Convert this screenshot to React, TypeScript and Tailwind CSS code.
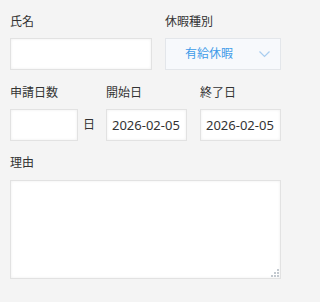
import React from "react";

const font = { fontFamily: '"Noto Sans", "Noto Sans CJK JP", sans-serif' };

export default function App() {
  const inputCls =
    "h-[32px] border border-[#e2e2e2] bg-white shadow-[inset_0_0_3px_rgba(0,0,0,0.07)] outline-none text-[13px] text-[#333] px-[5px]";
  const labelCls = "text-[12px] leading-[18px] text-[#333] mb-[7px]";
  return (
    <div className="w-[320px] h-[302px] bg-[#f4f4f4] px-[10px] pt-[13px]" style={font}>
      <div className="flex gap-[13px]">
        <div className="flex flex-col w-[142px]">
          <div className={labelCls}>氏名</div>
          <input className={inputCls + " w-[142px]"} readOnly />
        </div>
        <div className="flex flex-col w-[116px]">
          <div className={labelCls}>休暇種別</div>
          <div className="h-[32px] w-[116px] border border-[#e3e6ea] bg-[#f7f9fc] flex items-center pl-[19px] pr-[10px] justify-between">
            <span className="text-[12px] text-[#3d9be9]">有給休暇</span>
            <svg width="11" height="7" viewBox="0 0 11 7" className="mt-[1px]">
              <polyline points="0.5,0.5 5.5,5.5 10.5,0.5" fill="none" stroke="#a8cdef" strokeWidth="1.2" />
            </svg>
          </div>
        </div>
      </div>

      <div className="flex mt-[14px]">
        <div className="flex flex-col w-[96px]">
          <div className={labelCls}>申請日数</div>
          <div className="flex items-center gap-[5px]">
            <input className={inputCls + " w-[68px]"} readOnly />
            <span className="text-[12px] text-[#333]">日</span>
          </div>
        </div>
        <div className="flex flex-col w-[81px] mr-[13px]">
          <div className={labelCls}>開始日</div>
          <input className={inputCls + " w-[81px]"} value="2026-02-05" readOnly />
        </div>
        <div className="flex flex-col w-[81px]">
          <div className={labelCls}>終了日</div>
          <input className={inputCls + " w-[81px]"} value="2026-02-05" readOnly />
        </div>
      </div>

      <div className="flex flex-col mt-[13px]">
        <div className="text-[12px] leading-[18px] text-[#333] mb-[8px]">理由</div>
        <div className="relative w-[271px] h-[99px]">
          <textarea className="block w-[271px] h-[99px] resize-none border border-[#e2e2e2] bg-white shadow-[inset_0_0_3px_rgba(0,0,0,0.07)] outline-none" readOnly />
          <svg width="8" height="8" viewBox="0 0 8 8" className="absolute right-[2px] bottom-[2px]">
            <rect x="0" y="6" width="2" height="2" fill="#c3c9cf" />
            <rect x="3" y="6" width="2" height="2" fill="#c3c9cf" />
            <rect x="6" y="6" width="2" height="2" fill="#c3c9cf" />
            <rect x="3" y="3" width="2" height="2" fill="#c3c9cf" />
            <rect x="6" y="3" width="2" height="2" fill="#c3c9cf" />
            <rect x="6" y="0" width="2" height="2" fill="#c3c9cf" />
          </svg>
        </div>
      </div>
    </div>
  );
}
